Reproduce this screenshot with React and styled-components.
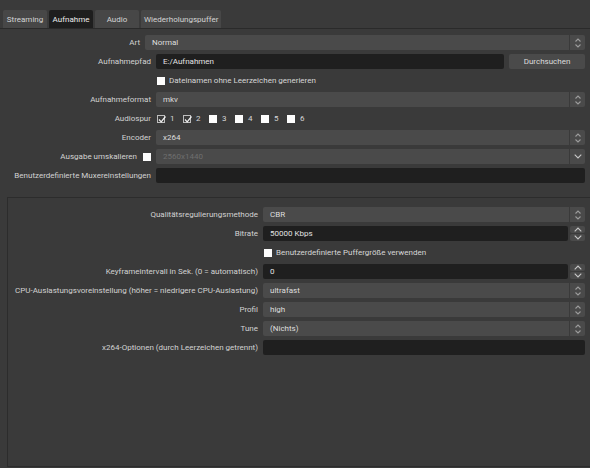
import styled, { createGlobalStyle } from "styled-components"

const GlobalStyle = createGlobalStyle`
  html, body {
    margin: 0;
    padding: 0;
    background: #3a3a3a;
  }
  body {
    font-family: Roboto, "Liberation Sans", sans-serif;
    font-size: 8px;
    color: #d6d6d6;
  }
`

const Window = styled.div`
  width: 590px;
  height: 468px;
  overflow: hidden;
  background: #3a3a3a;
  display: flex;
  flex-direction: column;
`

const TabBar = styled.div`
  display: flex;
  gap: 2px;
  padding: 10px 0 0 3px;
  height: 18px;
  border-bottom: 1px solid #2a2a2a;
`

const Tab = styled.div`
  display: flex;
  align-items: center;
  justify-content: center;
  min-width: 38px;
  padding: 0 3px;
  background: ${({ $active }) => ($active ? "#1e1e1e" : "#474747")};
  color: ${({ $active }) => ($active ? "#ececec" : "#d4d4d4")};
  border-radius: 2px 2px 0 0;
`

const TopSection = styled.div`
  display: flex;
  flex-direction: column;
  gap: 4px;
  padding-top: 6px;
`

const FormGrid = styled.div`
  display: grid;
  grid-template-columns: ${({ $labelWidth }) => $labelWidth}px 1fr;
  grid-auto-rows: 15px;
  column-gap: 5px;
  row-gap: 4px;
  padding-right: 5px;
`

const Label = styled.div`
  display: flex;
  align-items: center;
  justify-content: flex-end;
  gap: 6px;
  white-space: nowrap;
  color: #d2d2d2;
`

const Cell = styled.div`
  display: flex;
  align-items: center;
  gap: 5px;
  min-width: 0;
`

const ComboBox = styled.div`
  flex: 1;
  height: 15px;
  display: flex;
  align-items: stretch;
  background: #4a4a4a;
  border-radius: 2px;
`

const ComboText = styled.div`
  flex: 1;
  display: flex;
  align-items: center;
  padding-left: 7px;
  color: ${({ $disabled }) => ($disabled ? "#6e6e6e" : "#dedede")};
`

const ComboArrows = styled.div`
  width: 15px;
  border-left: 1px solid #3a3a3a;
  display: flex;
  flex-direction: column;
  align-items: center;
  justify-content: center;
  gap: 2px;
`

const TextInput = styled.div`
  flex: 1;
  height: 15px;
  display: flex;
  align-items: center;
  padding-left: 7px;
  background: #1f1f1f;
  border-radius: 2px;
  color: #e2e2e2;
`

const Button = styled.div`
  width: 76px;
  height: 15px;
  display: flex;
  align-items: center;
  justify-content: center;
  background: #4a4a4a;
  border-radius: 2px;
  color: #dcdcdc;
`

const SpinButtons = styled.div`
  width: 15px;
  height: 15px;
  display: flex;
  flex-direction: column;
  gap: 1px;
  margin-left: -3px;
`

const SpinButton = styled.div`
  flex: 1;
  display: flex;
  align-items: center;
  justify-content: center;
  background: #4a4a4a;
  border-radius: 2px;
`

const CheckRow = styled.label`
  display: flex;
  align-items: center;
  gap: 4px;
  padding-left: 1px;
  white-space: nowrap;
  color: #d6d6d6;
`

const Box = styled.span`
  width: 8px;
  height: 8px;
  flex: none;
  position: relative;
  box-sizing: border-box;
  background: ${({ $checked }) => ($checked ? "transparent" : "#fdfdfd")};
  border: ${({ $checked }) => ($checked ? "1px solid #bdbdbd" : "none")};
`

const CheckMark = styled.svg`
  position: absolute;
  left: -1px;
  top: -2px;
`

const TrackList = styled.div`
  display: flex;
  align-items: center;
`

const Track = styled(CheckRow)`
  width: 25px;
  gap: 5px;
`

const Panel = styled.div`
  flex: 1;
  margin: 14px 0 1px 7px;
  padding-top: 9px;
  border: 1px solid #2c2c2c;
  border-right: none;
`

const Chevron = ({ up, strong }) => (
  <svg width={strong ? 8 : 6} height={strong ? 5 : 4} viewBox={strong ? "0 0 8 5" : "0 0 6 4"}>
    <path
      d={
        strong
          ? up ? "M0.7 4.3 L4 1 L7.3 4.3" : "M0.7 0.7 L4 4 L7.3 0.7"
          : up ? "M0.5 3.5 L3 1 L5.5 3.5" : "M0.5 0.5 L3 3 L5.5 0.5"
      }
      fill="none"
      stroke={strong ? "#c8c8c8" : "#9c9c9c"}
      strokeWidth="1.1"
    />
  </svg>
)

const Combo = ({ value, disabled, single }) => (
  <ComboBox>
    <ComboText $disabled={disabled}>{value}</ComboText>
    <ComboArrows>
      {single ? <Chevron strong /> : (
        <>
          <Chevron up />
          <Chevron />
        </>
      )}
    </ComboArrows>
  </ComboBox>
)

const Spin = ({ value }) => (
  <>
    <TextInput>{value}</TextInput>
    <SpinButtons>
      <SpinButton><Chevron up strong /></SpinButton>
      <SpinButton><Chevron strong /></SpinButton>
    </SpinButtons>
  </>
)

const Check = ({ checked }) => (
  <Box $checked={checked}>
    {checked && (
      <CheckMark width="10" height="10" viewBox="0 0 10 10">
        <path d="M2 5.5 L4.2 7.8 L8.5 2.5" fill="none" stroke="#f2f2f2" strokeWidth="1.2" />
      </CheckMark>
    )}
  </Box>
)

const tabs = ["Streaming", "Aufnahme", "Audio", "Wiederholungspuffer"]
const tracks = [1, 2, 3, 4, 5, 6]

export default function App() {
  return (
    <>
      <GlobalStyle />
      <Window>
        <TabBar>
          {tabs.map((t) => (
            <Tab key={t} $active={t === "Aufnahme"}>{t}</Tab>
          ))}
        </TabBar>

        <TopSection>
          <FormGrid $labelWidth={140}>
            <Label>Art</Label>
            <Cell><Combo value="Normal" /></Cell>
          </FormGrid>

          <FormGrid $labelWidth={151}>
            <Label>Aufnahmepfad</Label>
            <Cell>
              <TextInput>E:/Aufnahmen</TextInput>
              <Button>Durchsuchen</Button>
            </Cell>

            <Label />
            <Cell>
              <CheckRow><Check />Dateinamen ohne Leerzeichen generieren</CheckRow>
            </Cell>

            <Label>Aufnahmeformat</Label>
            <Cell><Combo value="mkv" /></Cell>

            <Label>Audiospur</Label>
            <Cell>
              <TrackList>
                {tracks.map((n) => (
                  <Track key={n}><Check checked={n <= 2} />{n}</Track>
                ))}
              </TrackList>
            </Cell>

            <Label>Encoder</Label>
            <Cell><Combo value="x264" /></Cell>

            <Label>Ausgabe umskalieren <Check /></Label>
            <Cell><Combo value="2560x1440" disabled single /></Cell>

            <Label>Benutzerdefinierte Muxereinstellungen</Label>
            <Cell><TextInput /></Cell>
          </FormGrid>
        </TopSection>

        <Panel>
          <FormGrid $labelWidth={250}>
            <Label>Qualitätsregulierungsmethode</Label>
            <Cell><Combo value="CBR" /></Cell>

            <Label>Bitrate</Label>
            <Cell><Spin value="50000 Kbps" /></Cell>

            <Label />
            <Cell>
              <CheckRow><Check />Benutzerdefinierte Puffergröße verwenden</CheckRow>
            </Cell>

            <Label>Keyframeintervall in Sek. (0 = automatisch)</Label>
            <Cell><Spin value="0" /></Cell>

            <Label>CPU-Auslastungsvoreinstellung (höher = niedrigere CPU-Auslastung)</Label>
            <Cell><Combo value="ultrafast" /></Cell>

            <Label>Profil</Label>
            <Cell><Combo value="high" /></Cell>

            <Label>Tune</Label>
            <Cell><Combo value="(Nichts)" /></Cell>

            <Label>x264-Optionen (durch Leerzeichen getrennt)</Label>
            <Cell><TextInput /></Cell>
          </FormGrid>
        </Panel>
      </Window>
    </>
  )
}
